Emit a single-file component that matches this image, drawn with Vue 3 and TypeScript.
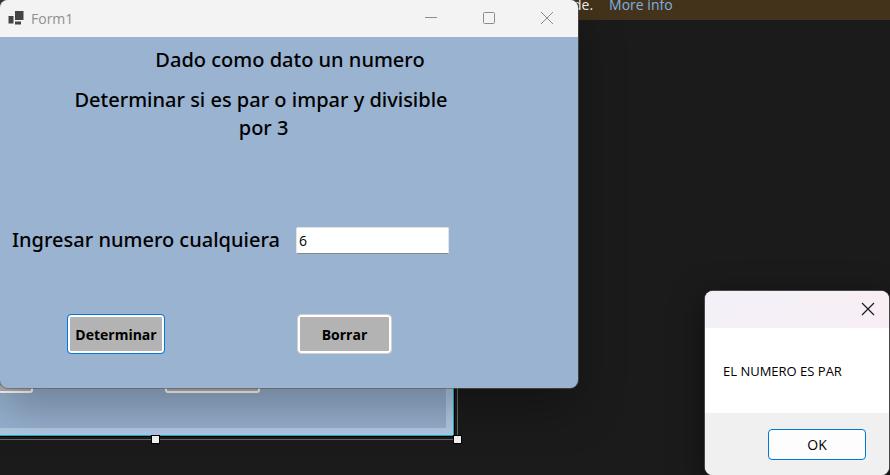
<script setup lang="ts">
import { ref } from 'vue'

const numero = ref('6')
const mensaje = ref('EL NUMERO ES PAR')
const abierto = ref(true)

function determinar(): void {
  const n = Number(numero.value)
  const partes = [n % 2 === 0 ? 'EL NUMERO ES PAR' : 'EL NUMERO ES IMPAR']
  if (n % 2 !== 0 && n % 3 === 0) partes.push('DIVISIBLE POR 3')
  mensaje.value = partes.join(' Y ')
  abierto.value = true
}

function borrar(): void {
  numero.value = ''
}
</script>

<template>
  <div class="desktop">
    <div class="banner">
      <span>de.</span>
      <a href="#">More info</a>
    </div>

    <div class="designer">
      <div class="surface">
        <div class="canvas">
          <i class="ghost"></i>
          <i class="ghost"></i>
        </div>
      </div>
      <i class="handle middle"></i>
      <i class="handle corner"></i>
    </div>

    <section class="window">
      <header class="titlebar">
        <svg class="app-icon" width="16" height="16" viewBox="0 0 16 16">
          <path fill="#444" d="M7 0h8.500v9H7zM.5 5H5.500v7.500H.5zM7 10.500h6v3H7z" />
        </svg>
        <span class="caption">Form1</span>
        <button class="tool" type="button" aria-label="Minimizar">
          <svg width="14" height="14" viewBox="0 0 14 14"><path d="M1 6.500h12" /></svg>
        </button>
        <button class="tool" type="button" aria-label="Maximizar">
          <svg width="14" height="14" viewBox="0 0 14 14"><rect x="1.500" y="1.500" width="11" height="11" rx="1" /></svg>
        </button>
        <button class="tool" type="button" aria-label="Cerrar">
          <svg width="14" height="14" viewBox="0 0 14 14"><path d="M1 1l12 12M13 1L1 13" /></svg>
        </button>
      </header>

      <form class="form" @submit.prevent="determinar">
        <h1 class="heading">Dado como dato un numero</h1>
        <p class="heading detail">Determinar si es par o impar y divisible<br />&nbsp;por 3</p>
        <div class="field">
          <label for="numero">Ingresar numero cualquiera</label>
          <input id="numero" v-model="numero" type="text" autocomplete="off" />
        </div>
        <div class="actions">
          <button class="action primary" type="submit">Determinar</button>
          <button class="action" type="button" @click="borrar">Borrar</button>
        </div>
      </form>
    </section>

    <section v-if="abierto" class="dialog" role="dialog">
      <header class="dialog-bar">
        <button class="close" type="button" aria-label="Cerrar" @click="abierto = false">
          <svg width="14" height="14" viewBox="0 0 14 14"><path d="M1 1l12 12M13 1L1 13" /></svg>
        </button>
      </header>
      <p class="message">{{ mensaje }}</p>
      <footer class="dialog-foot">
        <button class="ok" type="button" @click="abierto = false">OK</button>
      </footer>
    </section>
  </div>
</template>

<style>
body {
  background: #1b1b1b;
}
</style>

<style scoped>
.desktop {
  position: relative;
  min-height: 100vh;
  overflow: hidden;
  background: #1b1b1b;
  font-family: 'Open Sans', 'Noto Sans', sans-serif;
  color: #000;
}
.desktop * {
  box-sizing: border-box;
}
button {
  font-family: inherit;
}
.banner {
  display: flex;
  gap: 16px;
  height: 20px;
  padding-left: 573px;
  background: #42331a;
  font-size: 14px;
  line-height: 10px;
  color: #f1f1f1;
}
.banner a {
  color: #7fb2e0;
  text-decoration: none;
}
.designer {
  position: absolute;
  left: -1px;
  top: 40px;
  width: 459px;
  height: 400px;
  padding-right: 3px;
  padding-bottom: 3px;
  border: solid #686868;
  border-width: 0 1px 1px 0;
}
.surface {
  height: 100%;
  padding: 0 7px 7px 0;
  background: #b2c8e2;
  border: solid #17b3cb;
  border-width: 0 1px 1px 0;
  box-shadow: 1px 1px 0 #000;
}
.canvas {
  display: flex;
  align-items: flex-end;
  gap: 132px;
  height: 100%;
  padding-bottom: 35px;
  background: #96b0ce;
}
.ghost {
  width: 95px;
  height: 40px;
  background: #b3b3b3;
  border: 2px solid #fff;
  border-radius: 3px;
}
.ghost:first-child {
  width: 34px;
  border-left: 0;
}
.handle {
  position: absolute;
  width: 9px;
  height: 9px;
  background: #f3f3f3;
  border: 1px solid #000;
}
.middle {
  left: 152px;
  bottom: -5px;
}
.corner {
  right: -5px;
  bottom: -5px;
}
.window {
  position: absolute;
  left: 0;
  top: 0;
  width: 578px;
  border-radius: 8px;
  background: #99b3d1;
  box-shadow: 0 0 0 1px rgba(90, 90, 90, 0.6), 0 20px 48px rgba(0, 0, 0, 0.28);
}
.titlebar {
  display: flex;
  align-items: center;
  height: 37px;
  padding-right: 2px;
  padding-left: 8px;
  border-radius: 8px 8px 0 0;
  background: #f3f3f3;
}
.caption {
  flex: 1;
  padding-left: 7px;
  font-size: 14px;
  color: #8f8f8f;
}
.tool {
  display: grid;
  place-items: center;
  width: 58px;
  height: 37px;
  padding: 0 0 1px;
  border: 0;
  background: none;
}
.tool svg,
.close svg {
  fill: none;
  stroke: #8c8c8c;
}
.form {
  padding: 9px 0 34px;
}
.heading {
  width: 580px;
  margin: 0;
  font-family: 'Noto Sans', sans-serif;
  font-size: 20px;
  font-weight: 500;
  line-height: 28px;
  text-align: center;
}
.detail {
  width: 522px;
  padding-top: 12px;
}
.field {
  display: flex;
  align-items: center;
  margin-top: 84px;
  padding-left: 12px;
}
.field label {
  width: 284px;
  font-family: 'Noto Sans', sans-serif;
  font-size: 20px;
  font-weight: 500;
  line-height: 28px;
}
.field input {
  width: 153px;
  height: 27px;
  padding: 0 2px;
  border: 1px solid #e3e3e3;
  border-bottom-color: #868686;
  border-radius: 2px;
  outline: 0;
  background: #fff;
  font-family: inherit;
  font-size: 14px;
  color: #000;
}
.actions {
  display: flex;
  gap: 132px;
  margin-top: 60px;
  padding-left: 67px;
}
.action {
  width: 95px;
  height: 40px;
  padding: 0;
  border: 1px solid #d0d0d0;
  border-radius: 4px;
  background: #b3b3b3;
  box-shadow: inset 0 0 0 2px #fff;
  font-size: 14px;
  font-weight: 700;
  color: #000;
}
.primary {
  width: 98px;
  border-color: #0078d4;
}
.dialog {
  position: absolute;
  right: 1px;
  top: 291px;
  width: 184px;
  overflow: hidden;
  border-radius: 8px;
  background: #fff;
  box-shadow: 0 0 0 1px #484848, 0 8px 32px rgba(0, 0, 0, 0.5);
}
.dialog-bar {
  display: flex;
  justify-content: flex-end;
  height: 37px;
  background: linear-gradient(100deg, #f4f0f8, #f6eff6 70%, #f9edf5);
}
.close {
  display: grid;
  place-items: center;
  width: 42px;
  padding: 0 0 1px;
  border: 0;
  background: none;
}
.close svg {
  stroke: #1a1a1a;
  stroke-width: 1.2;
}
.message {
  margin: 0;
  padding: 33px 18px 32px;
  font-size: 13px;
  line-height: 20px;
  white-space: nowrap;
}
.dialog-foot {
  display: flex;
  justify-content: flex-end;
  padding: 16px 23px 15px;
  background: #f0f0f0;
}
.ok {
  width: 98px;
  height: 31px;
  padding: 0;
  border: 1px solid #0078d4;
  border-radius: 4px;
  background: #fdfdfd;
  font-size: 14px;
  color: #000;
}
</style>
